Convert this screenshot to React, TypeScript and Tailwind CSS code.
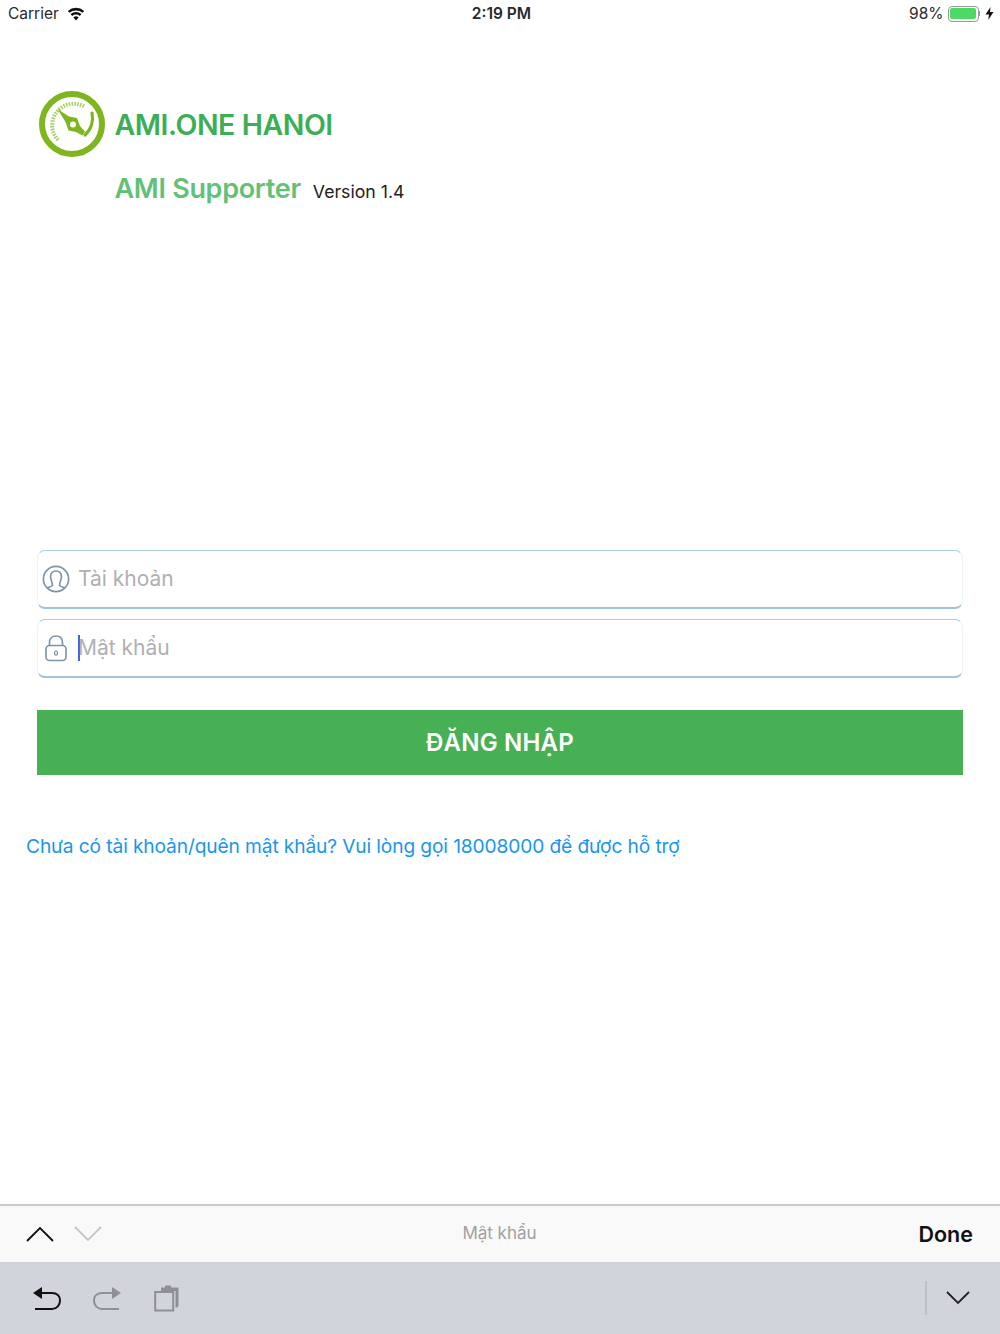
import React from "react";

const Logo = () => (
  <svg width="66" height="66" viewBox="0 0 66 66" fill="none">
    <circle cx="33" cy="33" r="30" stroke="#7fb61f" strokeWidth="6" />
    {/* tick arc */}
    <path d="M19 49 A21.5 21.5 0 0 1 46 16" stroke="#a8cf6a" strokeWidth="4" strokeDasharray="1.6 1.2" />
    {/* right arc */}
    <path d="M53 22 A23 23 0 0 1 46 44" stroke="#7fb61f" strokeWidth="3.2" strokeLinecap="round" />
    {/* needle */}
    <path d="M18.5 18 L30 25.5 L38 27 L41 35 L46 40.5 L43.5 44.5 L37 41 L29.5 39.5 L26.5 31 Z" fill="#7fb61f" />
    <circle cx="34" cy="33.5" r="3" fill="#fff" />
  </svg>
);

const UserIcon = () => (
  <svg width="28" height="28" viewBox="0 0 28 28" fill="none" stroke="#7b93a8" strokeWidth="1.6">
    <circle cx="14" cy="14" r="12.6" />
    <path d="M10.5 20 C10.5 17.5 8.6 15 8.6 11.5 C8.6 8 11 6 14 6 C17 6 19.4 8 19.4 11.5 C19.4 15 17.5 17.5 17.5 20 C17.5 21.5 20.5 22 23 23" />
    <path d="M10.5 20 C10.5 21.5 7.5 22 5 23" />
  </svg>
);

const LockIcon = () => (
  <svg width="24" height="28" viewBox="0 0 24 28" fill="none" stroke="#7b93a8" strokeWidth="1.6">
    <rect x="2" y="11.5" width="20" height="15" rx="3.5" />
    <path d="M5.5 11.5 V8.5 C5.5 4.5 8 2 12 2 C16 2 18.5 4.5 18.5 8.5 V11.5" />
    <rect x="10.6" y="17" width="2.8" height="4.2" rx="1.4" strokeWidth="1.2" />
  </svg>
);

const Chevron = ({ up, color }: { up?: boolean; color: string }) => (
  <svg width="28" height="16" viewBox="0 0 28 16" fill="none" stroke={color} strokeWidth="1.8">
    <path d={up ? "M1 15 L14 2 L27 15" : "M1 1 L14 14 L27 1"} />
  </svg>
);

const UndoIcon = ({ flip, color }: { flip?: boolean; color: string }) => (
  <svg width="30" height="26" viewBox="0 0 30 26" fill="none" className={flip ? "-scale-x-100" : ""}>
    <path d="M1 8 L10 2 V14 Z" fill={color} />
    <path d="M9 8 H20 C25 8 28 11 28 15.5 C28 20 25 24 20 24 H3" stroke={color} strokeWidth="2" />
  </svg>
);

const CopyIcon = () => (
  <svg width="26" height="28" viewBox="0 0 26 28" fill="none">
    <path d="M7 3.5 H11 V1.5 H17 V3.5 H24.5 V21 C24.5 23 23.5 23.6 21.5 23.6 V7 H7 Z" fill="#8e9094" />
    <rect x="1.2" y="8" width="18" height="18.5" stroke="#8e9094" strokeWidth="2" />
  </svg>
);

const Field = ({ icon, label, caret }: { icon: React.ReactNode; label: string; caret?: boolean }) => (
  <div className="flex h-[59px] items-center rounded-[8px] border border-[#edf3f8] border-t-[#a9cfdc] border-b-2 border-b-[#a3c3d8] bg-white pl-[3px]">
    <div className="flex w-[30px] justify-center">{icon}</div>
    <div className="ml-[7px] flex items-center">
      {caret && <div className="h-[26px] w-[2px] bg-[#3f63e0]" />}
      <span className={`text-[21px] leading-none text-[#b0b0b2] ${caret ? "-ml-[2px]" : ""}`}>{label}</span>
    </div>
  </div>
);

export default function App() {
  return (
    <div
      className="flex h-[1334px] w-[1000px] flex-col bg-white"
      style={{ fontFamily: "Inter, 'Noto Sans', sans-serif" }}
    >
      {/* Status bar */}
      <div className="flex h-[27px] items-center justify-between pl-[8px] pr-[5px] text-[15.5px] text-[#2a2a2a]">
        <div className="flex w-[300px] items-center gap-[8px]">
          <span>Carrier</span>
          <svg width="18" height="14" viewBox="0 0 18 14" fill="#111">
            <path d="M9 13.5 L6.4 10.4 A4 4 0 0 1 11.6 10.4 Z" />
            <path d="M5.2 9 L3.6 7.1 A8 8 0 0 1 14.4 7.1 L12.8 9 A5.6 5.6 0 0 0 5.2 9 Z" />
            <path d="M2.5 5.8 L0.8 3.9 A12.4 12.4 0 0 1 17.2 3.9 L15.5 5.8 A10 10 0 0 0 2.5 5.8 Z" />
          </svg>
        </div>
        <span className="font-semibold">2:19 PM</span>
        <div className="flex w-[300px] items-center justify-end gap-[4px]">
          <span>98%</span>
          <div className="flex items-center">
            <div className="h-[16px] w-[31px] rounded-[4px] border border-[#9a9a9a] p-[1.5px]">
              <div className="h-full w-full rounded-[2px] bg-[#4cd964]" />
            </div>
            <div className="h-[5px] w-[1.5px] bg-[#9a9a9a]" />
          </div>
          <svg width="9" height="13" viewBox="0 0 9 13" fill="#111" className="ml-[1px] mr-[1px]">
            <path d="M5.5 0 L0.5 7.5 H4 L3.2 13 L8.5 5 H5 Z" />
          </svg>
        </div>
      </div>

      {/* Header */}
      <div className="ml-[39px] mt-[64px] flex items-center">
        <Logo />
        <span className="ml-[9.5px] mt-[2px] text-[28.5px] font-semibold leading-none tracking-[-0.45px] text-[#3cae55]">
          AMI.ONE HANOI
        </span>
      </div>
      <div className="ml-[114.5px] mt-[16px] flex items-baseline">
        <span className="text-[27px] font-semibold leading-[32px] tracking-[-0.3px] text-[#63c177]">AMI Supporter</span>
        <span className="ml-[12px] text-[17.7px] text-[#222]">Version 1.4</span>
      </div>

      {/* Form */}
      <div className="ml-[37px] mr-[37px] mt-[344px] flex flex-col gap-[10px]">
        <Field icon={<UserIcon />} label="Tài khoản" />
        <Field icon={<LockIcon />} label="Mật khẩu" caret />
      </div>
      <div className="mx-[37px] mt-[32px] flex h-[65px] items-center justify-center bg-[#47b055] pt-[2px] text-[24px] font-semibold tracking-[0.2px] text-white">
        ĐĂNG NHẬP
      </div>
      <div className="ml-[26px] mt-[57px] text-[19.2px] leading-[28px] tracking-[-0.13px] text-[#1a96ee]">
        Chưa có tài khoản/quên mật khẩu? Vui lòng gọi 18008000 để được hỗ trợ
      </div>

      {/* Keyboard accessory */}
      <div className="mt-auto flex h-[58px] items-center justify-between border-t-2 border-[#c8c8c8] bg-[#f9f9f9] pl-[26px] pr-[27px]">
        <div className="flex w-[200px] items-center gap-[20px]">
          <Chevron up color="#111" />
          <Chevron color="#c6c6c8" />
        </div>
        <span className="text-[17px] text-[#a0a0a0]">Mật khẩu</span>
        <span className="w-[200px] text-right text-[21.5px] font-semibold text-[#111]">Done</span>
      </div>
      <div className="flex h-[72px] items-center justify-between bg-[#d1d4db] pl-[32px] pr-[29px]">
        <div className="flex items-center gap-[30px]">
          <UndoIcon color="#111" />
          <UndoIcon flip color="#8e9094" />
          <div className="ml-[2px]">
            <CopyIcon />
          </div>
        </div>
        <div className="flex items-center gap-[18px]">
          <div className="h-[34px] w-[2px] bg-[#bcbfc5]" />
          <svg width="26" height="16" viewBox="0 0 26 16" fill="none" stroke="#222" strokeWidth="1.8">
            <path d="M2 2 L13 13 L24 2" />
          </svg>
        </div>
      </div>
    </div>
  );
}
